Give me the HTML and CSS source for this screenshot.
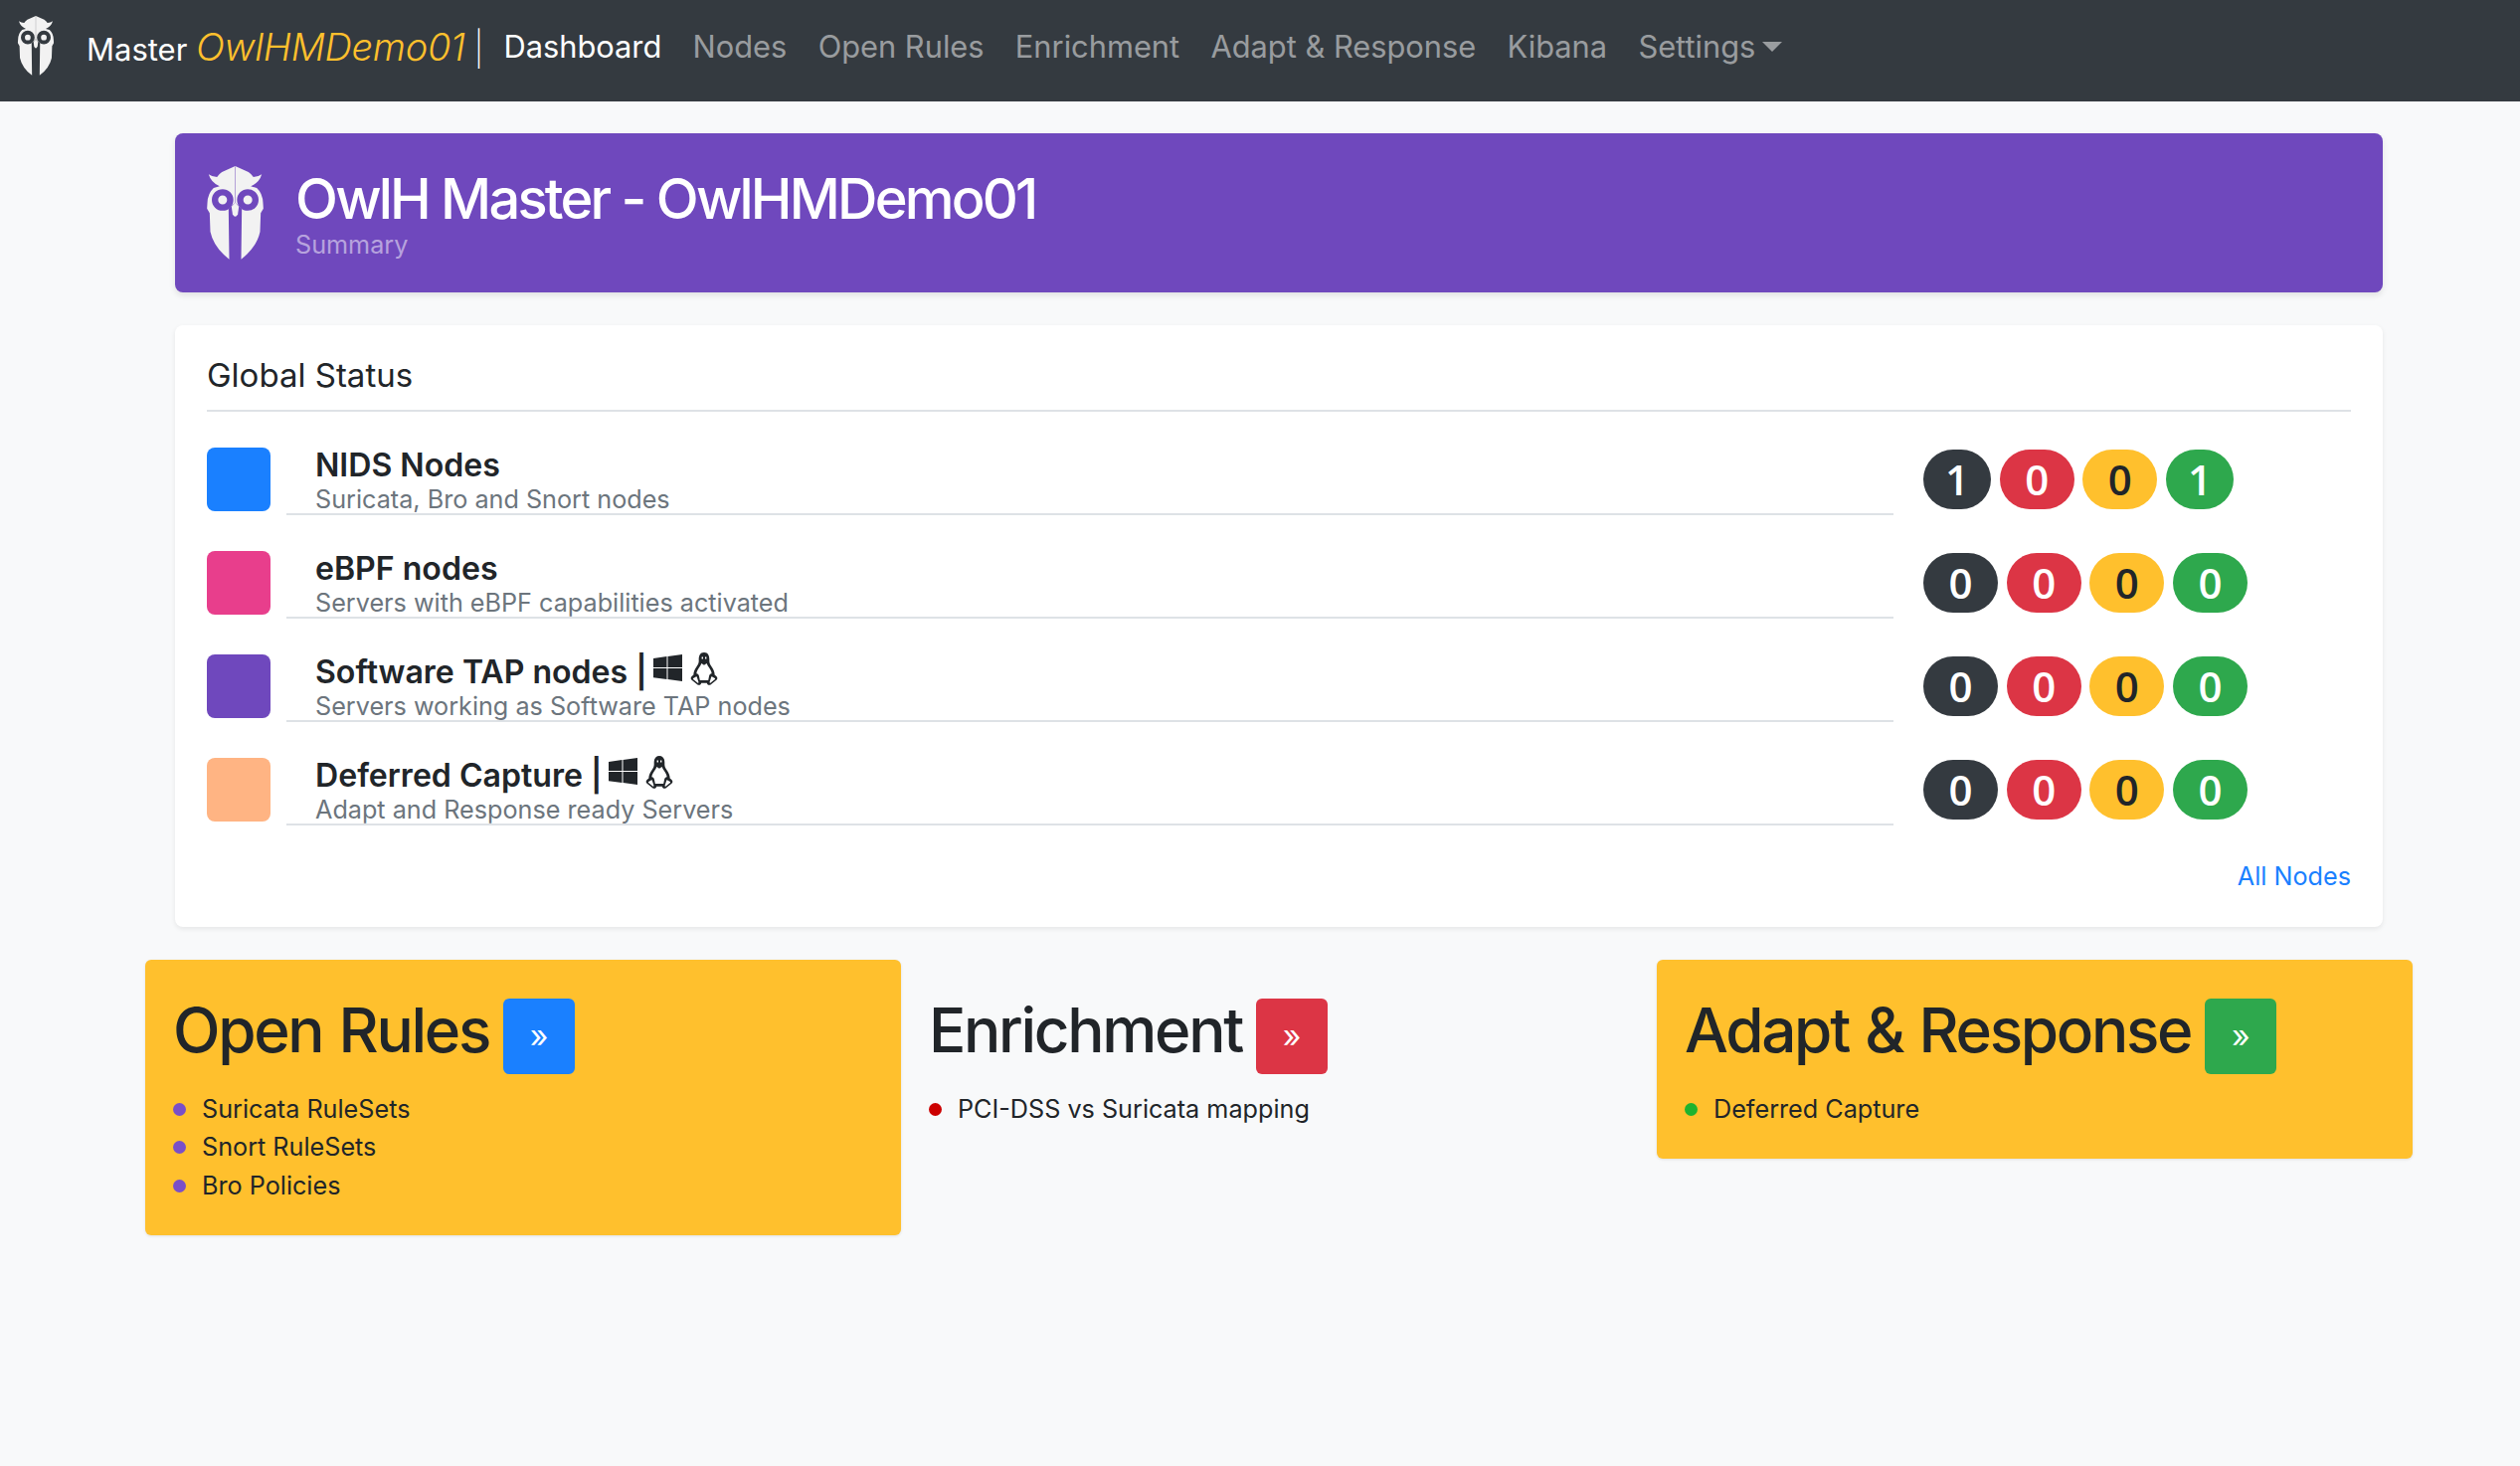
FILE: index.html
```html
<!DOCTYPE html>
<html lang="en">
<head>
<meta charset="utf-8">
<title>OwlH Master</title>
<link rel="stylesheet" href="styles.css">
</head>
<body>
<svg class="defs" aria-hidden="true">
  <symbol id="owl" viewBox="0 0 170 282">
    <path class="owl-body" d="M85 0 L45 18 Q36 24 30 33 Q16 33 5 25 Q12 50 38 61 L20 66 Q2 82 1 112 L0 128 L8 142 L10 198 Q20 245 67 281 L65 128 L85 110 Z"/>
    <path class="owl-body" d="M85 0 L125 18 Q134 24 140 33 Q154 33 165 25 Q158 50 132 61 L150 66 Q168 82 169 112 L170 128 L162 142 L160 198 Q150 245 103 281 L105 128 L85 110 Z"/>
    <circle class="owl-ring" cx="47" cy="102" r="23"/>
    <circle class="owl-ring" cx="123" cy="102" r="23"/>
    <path class="owl-line" d="M85 2 V118"/>
    <path class="owl-beak" d="M74 122 L85 110 L96 122 L93 145 Q85 160 77 145 Z"/>
  </symbol>
  <symbol id="win" viewBox="0 0 29 27">
    <path d="M0 4 L13.5 2.1 V13 H0 Z M14.5 2 L29 0 V13 H14.5 Z M0 14 H13.5 V25 L0 23.2 Z M14.5 14 H29 V27 L14.5 25 Z"/>
  </symbol>
  <symbol id="tux" viewBox="0 0 28 33">
    <path fill-rule="evenodd" d="M14 0 C9.5 0 8.5 4 8.7 8 C8.8 10.5 8 12 6.5 14.3 C4.5 17.3 3.2 20 3.4 22.5 L1.6 24 C0.2 25.2 0.5 27 1.6 27.8 L7.5 32.4 C9 33.4 11 32.6 11.2 30.8 H16.8 C17 32.6 19 33.4 20.5 32.4 L26.4 27.8 C27.5 27 27.8 25.2 26.4 24 L24.6 22.5 C24.8 20 23.5 17.3 21.5 14.3 C20 12 19.2 10.5 19.3 8 C19.5 4 18.5 0 14 0 Z M11.6 4.6 H13 V6.6 H11.6 Z M15 4.6 H16.4 V6.6 H15 Z M11.4 11 L14 12.8 L16.6 11 C17.2 12.6 18 13.9 19.2 15.6 C20.8 18 21.6 19.9 21.6 21.3 C20.4 21.2 19.4 22.2 19 24 L18.2 27.9 H9.8 L9 24 C8.6 22.2 7.6 21.2 6.4 21.3 C6.4 19.9 7.2 18 8.8 15.6 C10 13.9 10.8 12.6 11.4 11 Z M5.8 24.4 C6.6 24.2 6.9 25 7.1 25.7 L8.4 29.7 C8.7 30.6 8 31 7.4 30.5 L3.4 27.3 C2.6 26.6 2.8 26.1 3.6 25.7 Z M22.2 24.4 L24.4 25.7 C25.2 26.1 25.4 26.6 24.6 27.3 L20.6 30.5 C20 31 19.3 30.6 19.6 29.7 L20.9 25.7 C21.1 25 21.4 24.2 22.2 24.4 Z"/>
  </symbol>
</svg>

<nav class="navbar">
  <svg class="nav-logo"><use href="#owl"/></svg>
  <div class="brand">Master <em class="brand-name">OwlHMDemo01</em> <span class="brand-sep">|</span></div>
  <ul class="nav-links">
    <li class="nav-active">Dashboard</li>
    <li>Nodes</li>
    <li>Open Rules</li>
    <li>Enrichment</li>
    <li>Adapt &amp; Response</li>
    <li>Kibana</li>
    <li class="nav-dropdown">Settings<span class="caret"></span></li>
  </ul>
</nav>

<main class="page">
  <header class="hero">
    <svg class="hero-logo"><use href="#owl"/></svg>
    <div class="hero-text">
      <h1 class="hero-title">OwlH Master - OwlHMDemo01</h1>
      <div class="hero-sub">Summary</div>
    </div>
  </header>

  <section class="status">
    <h2 class="status-title">Global Status</h2>
    <div class="status-row">
      <span class="swatch swatch-blue"></span>
      <div class="status-info">
        <div class="status-name">NIDS Nodes</div>
        <div class="status-desc">Suricata, Bro and Snort nodes</div>
      </div>
      <div class="badges"><span class="badge b-dark b-one">1</span><span class="badge b-red">0</span><span class="badge b-yellow">0</span><span class="badge b-green b-one">1</span></div>
    </div>
    <div class="status-row">
      <span class="swatch swatch-pink"></span>
      <div class="status-info">
        <div class="status-name">eBPF nodes</div>
        <div class="status-desc">Servers with eBPF capabilities activated</div>
      </div>
      <div class="badges"><span class="badge b-dark">0</span><span class="badge b-red">0</span><span class="badge b-yellow">0</span><span class="badge b-green">0</span></div>
    </div>
    <div class="status-row">
      <span class="swatch swatch-purple"></span>
      <div class="status-info">
        <div class="status-name">Software TAP nodes | <svg class="os-win"><use href="#win"/></svg> <svg class="os-tux"><use href="#tux"/></svg></div>
        <div class="status-desc">Servers working as Software TAP nodes</div>
      </div>
      <div class="badges"><span class="badge b-dark">0</span><span class="badge b-red">0</span><span class="badge b-yellow">0</span><span class="badge b-green">0</span></div>
    </div>
    <div class="status-row">
      <span class="swatch swatch-orange"></span>
      <div class="status-info">
        <div class="status-name">Deferred Capture | <svg class="os-win"><use href="#win"/></svg> <svg class="os-tux"><use href="#tux"/></svg></div>
        <div class="status-desc">Adapt and Response ready Servers</div>
      </div>
      <div class="badges"><span class="badge b-dark">0</span><span class="badge b-red">0</span><span class="badge b-yellow">0</span><span class="badge b-green">0</span></div>
    </div>
    <div class="status-foot"><a class="all-nodes" href="#">All Nodes</a></div>
  </section>

  <section class="panels">
    <article class="panel panel-yellow">
      <div class="panel-head"><h2 class="panel-title">Open Rules</h2><a class="panel-btn btn-blue" href="#">»</a></div>
      <ul class="panel-list list-purple">
        <li>Suricata RuleSets</li>
        <li>Snort RuleSets</li>
        <li>Bro Policies</li>
      </ul>
    </article>
    <article class="panel">
      <div class="panel-head"><h2 class="panel-title">Enrichment</h2><a class="panel-btn btn-red" href="#">»</a></div>
      <ul class="panel-list list-red">
        <li>PCI-DSS vs Suricata mapping</li>
      </ul>
    </article>
    <article class="panel panel-yellow">
      <div class="panel-head"><h2 class="panel-title">Adapt &amp; Response</h2><a class="panel-btn btn-green" href="#">»</a></div>
      <ul class="panel-list list-green">
        <li>Deferred Capture</li>
      </ul>
    </article>
  </section>
</main>
</body>
</html>
```

FILE: styles.css
```css
* { box-sizing: border-box; }
html, body { margin: 0; min-height: 100%; }
body {
  background: #f8f9fa;
  color: #212529;
  font-family: Inter, "Liberation Sans", sans-serif;
  font-size: 25.6px;
  line-height: 1.5;
  min-height: 1474px;
}
.defs { display: none; }
.owl-body { fill: #f2f2f2; }
.owl-ring { fill: #f2f2f2; stroke: currentColor; stroke-width: 19; }
.owl-line { stroke: currentColor; stroke-width: 3; opacity: .3; fill: none; }
.owl-beak { fill: #f2f2f2; }

.navbar {
  height: 102px;
  background: #343a40;
  display: flex;
  align-items: center;
  padding: 0 0 8px 16px;
  color: #343a40;
}
.nav-logo { width: 40px; height: 60px; flex: none; margin-top: -2px; }
.brand {
  margin-left: 31px;
  color: #fff;
  font-size: 31px;
  white-space: nowrap;
  margin-right: 20px;
}
.brand-name { color: #ffc02d; font-size: 38px; font-style: italic; font-weight: 300; letter-spacing: -.3px; }
.brand-sep { font-size: 34px; font-weight: 200; }
.nav-links { display: flex; list-style: none; margin: 0; padding: 0; gap: 31.3px; font-size: 30.8px; color: rgba(255,255,255,.5); }
.nav-active { color: #fff; }
.caret {
  display: inline-block;
  margin-left: 7px;
  vertical-align: 6px;
  border-top: 10px solid rgba(255,255,255,.5);
  border-left: 10px solid transparent;
  border-right: 10px solid transparent;
}

.page { padding: 32px 0 0 146px; }
.hero {
  width: 2220px;
  height: 160px;
  margin-left: 30px;
  background: #6f48bd;
  border-radius: 8px;
  box-shadow: 0 3px 6px rgba(0,0,0,.1);
  display: flex;
  align-items: center;
  padding-left: 32px;
  color: #6f48bd;
}
.hero-logo { width: 57px; height: 94px; flex: none; }
.hero-text { margin-left: 32px; }
.hero-title { margin: 0; color: #fff; font-size: 56px; font-weight: 450; line-height: 64px; letter-spacing: -2.8px; }
.hero-sub { color: rgba(255,255,255,.5); font-size: 25.2px; line-height: 28px; }

.status {
  width: 2220px;
  margin: 33px 0 0 30px;
  height: 605px;
  background: #fff;
  border-radius: 8px;
  box-shadow: 0 2px 5px rgba(0,0,0,.08);
  padding: 26px 32px 0;
}
.status-title {
  margin: 0 0 31px;
  font-size: 33px;
  font-weight: 400;
  line-height: 48px;
  padding-bottom: 11px;
  border-bottom: 2px solid #dee2e6;
}
.status-row {
  display: grid;
  grid-template-columns: 64px 1632px auto;
  height: 104px;
  align-items: start;
}
.swatch { width: 64px; height: 64px; border-radius: 8px; margin-top: 5px; }
.swatch-blue { background: #1a80ff; }
.swatch-pink { background: #e83e8c; }
.swatch-purple { background: #6f48bd; }
.swatch-orange { background: #ffb483; }
.status-info {
  margin-left: 16px;
  padding: 3px 0 0 29px;
  height: 73px;
  border-bottom: 2px solid #dee2e6;
}
.status-name { font-size: 32.1px; font-weight: 600; line-height: 40px; height: 40px; white-space: nowrap; }
.status-desc { font-size: 25.2px; color: #6c757d; line-height: 28px; }
.os-win { width: 29px; height: 27px; fill: #212529; margin-left: -2px; vertical-align: 2px; }
.os-tux { width: 28px; height: 33px; fill: #212529; margin-left: 0; vertical-align: -2px; }
.badges { display: flex; gap: 8.67px; margin-left: 30px; margin-top: 7px; }
.badge {
  height: 60px;
  min-width: 75px;
  border-radius: 30px;
  font-family: "Open Sans", sans-serif;
  font-weight: 600;
  font-size: 42px;
  line-height: 60px;
  text-align: center;
  color: #fff;
}
.badge.b-one { min-width: 68px; }
.b-dark { background: #343a40; }
.b-red { background: #dc3545; }
.b-yellow { background: #ffc02d; color: #212529; }
.b-green { background: #2ea84d; }
.status-foot { text-align: right; padding-top: 1px; }
.all-nodes { color: #1a80ff; text-decoration: none; font-size: 25.2px; }

.panels {
  width: 2280px;
  margin-top: 33px;
  display: grid;
  grid-template-columns: repeat(3, 1fr);
  align-items: start;
}
.panel { padding: 32px 28px 31px; border-radius: 6px; }
.panel-yellow { background: #ffc02d; box-shadow: 0 1px 3px rgba(0,0,0,.1); }
.panel-head { display: flex; align-items: flex-start; gap: 14px; }
.panel-title { margin: 2px 0 0; font-size: 62px; font-weight: 450; line-height: 74px; letter-spacing: -2.3px; word-spacing: 2px; white-space: nowrap; }
.panel-btn {
  width: 72px;
  height: 76px;
  margin-top: 7px;
  border-radius: 6px;
  color: #fff;
  text-decoration: none;
  display: flex;
  align-items: center;
  justify-content: center;
  font-size: 32px;
}
.btn-blue { background: #1a80ff; }
.btn-red { background: #dc3545; }
.btn-green { background: #2ea84d; }
.panel-list { list-style: none; margin: 16px 0 0; padding: 0; font-size: 25.2px; line-height: 38.4px; }
.panel-list li { display: flex; align-items: center; gap: 16px; }
.panel-list li::before { content: ""; width: 13px; height: 13px; border-radius: 50%; flex: none; }
.list-purple li::before { background: #7a4fc8; }
.list-red li::before { background: #cc0000; }
.list-green li::before { background: #1fb32e; }
```
